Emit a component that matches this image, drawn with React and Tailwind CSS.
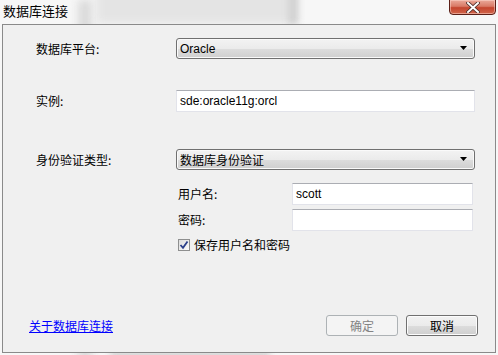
import React from "react";

const cjk = { fontFamily: '"Noto Sans CJK SC", "Noto Sans", sans-serif' };
const lat = { fontFamily: '"Liberation Sans", "Noto Sans CJK SC", sans-serif' };

function Combo({ text, cjkText }) {
  return (
    <div className="relative flex h-[21px] w-[299px] items-center rounded-[3px] border border-[#707070] bg-[linear-gradient(#f3f3f3_0%,#ebebeb_50%,#dddddd_51%,#cfcfcf_100%)] pl-[3px] text-[12px] text-black shadow-[inset_0_0_0_1px_#fafafa]" style={cjkText ? cjk : lat}>
      <span className="leading-none">{text}</span>
      <svg className="absolute right-[6px] top-[7px]" width="8" height="5" viewBox="0 0 8 5">
        <path d="M0 0 H7 L3.5 4 Z" fill="#000" />
      </svg>
    </div>
  );
}

function TextBox({ value, w }) {
  return (
    <div className={`flex h-[22px] ${w} items-center border border-[#e2e3ea] border-t-[#abadb3] bg-white pl-[3px] text-[12px] text-black`} style={lat}>
      {value}
    </div>
  );
}

export default function App() {
  return (
    <div className="relative h-[355px] w-[498px] overflow-hidden bg-[#f7f7f7]" style={cjk}>
      {/* desktop behind glass */}
      <div className="absolute left-[78px] top-0 h-[360px] w-[14px] bg-[#dadada] blur-[4px]" />
      <div className="absolute left-[96px] top-[-10px] h-[34px] w-[200px] bg-[#e4e4e4] blur-[5px]" />
      <div className="absolute left-[288px] top-[-10px] h-[34px] w-[10px] bg-[#d2d2d2] blur-[3px]" />
      <div className="absolute left-[110px] top-[350px] h-[10px] w-[160px] bg-[#d8d8d8] blur-[3px]" />

      {/* title bar */}
      <div className="relative flex h-[24px] items-start">
        <div className="pl-[3px] pt-[3px] text-[13px] leading-[16px] text-black">数据库连接</div>
        <div className="absolute left-[449px] top-[-1px] flex h-[16px] w-[47px] items-center justify-center rounded-b-[4px] border border-[#5a1f17] bg-[linear-gradient(#eaa99a_0%,#d97a66_45%,#c4452e_55%,#d1664c_100%)] shadow-[inset_0_0_0_1px_rgba(255,220,210,0.5)]">
          <svg width="14" height="11" viewBox="0 0 14 11">
            <path d="M2 1 L12 10 M12 1 L2 10" stroke="#4a2b27" strokeWidth="3.6" strokeLinecap="square" />
            <path d="M2 1 L12 10 M12 1 L2 10" stroke="#ffffff" strokeWidth="2" strokeLinecap="square" />
          </svg>
        </div>
      </div>

      {/* client frame */}
      <div className="relative ml-[2px] flex h-[329px] w-[494px] flex-col border border-[#8a8a8a] bg-[#f0f0f0] text-[12px] text-black">
        <div className="pl-[33px] pt-[13px]">
          <div className="flex h-[21px] items-center">
            <div className="w-[140px]">数据库平台:</div>
            <Combo text="Oracle" />
          </div>
          <div className="mt-[31px] flex h-[22px] items-center">
            <div className="w-[140px]">实例:</div>
            <TextBox value="sde:oracle11g:orcl" w="w-[299px]" />
          </div>
          <div className="mt-[37px] flex h-[21px] items-center">
            <div className="w-[140px]">身份验证类型:</div>
            <Combo text="数据库身份验证" cjkText />
          </div>
          <div className="ml-[142px]">
            <div className="mt-[13px] flex h-[22px] items-center">
              <div className="w-[114px]">用户名:</div>
              <TextBox value="scott" w="w-[181px]" />
            </div>
            <div className="mt-[4px] flex h-[22px] items-center">
              <div className="w-[114px]">密码:</div>
              <TextBox value="" w="w-[181px]" />
            </div>
            <div className="mt-[8px] flex h-[12px] items-center gap-[4px]">
              <div className="flex h-[12px] w-[12px] items-center justify-center border border-[#8e8f8f] bg-[linear-gradient(135deg,#dcdcdc,#fbfbfb)]">
                <svg width="10" height="10" viewBox="0 0 10 10">
                  <path d="M1.5 5 L4 7.8 L8.5 1.5" stroke="#2a3f8a" strokeWidth="1.8" fill="none" />
                </svg>
              </div>
              <span className="leading-none">保存用户名和密码</span>
            </div>
          </div>
        </div>

        <div className="mt-auto flex items-center justify-between pb-[16px] pl-[26px] pr-[17px]">
          <a className="text-[12px] text-[#0000ff] underline">关于数据库连接</a>
          <div className="flex gap-[8px]">
            <div className="flex h-[21px] w-[72px] items-center justify-center rounded-[3px] border border-[#adb2b5] bg-[#f4f4f4] text-[#838383]">确定</div>
            <div className="flex h-[21px] w-[72px] items-center justify-center rounded-[3px] border border-[#707070] bg-[linear-gradient(#f2f2f2_0%,#ebebeb_50%,#dddddd_51%,#cfcfcf_100%)] text-black shadow-[inset_0_0_0_1px_#fcfcfc]">取消</div>
          </div>
        </div>
      </div>
    </div>
  );
}
